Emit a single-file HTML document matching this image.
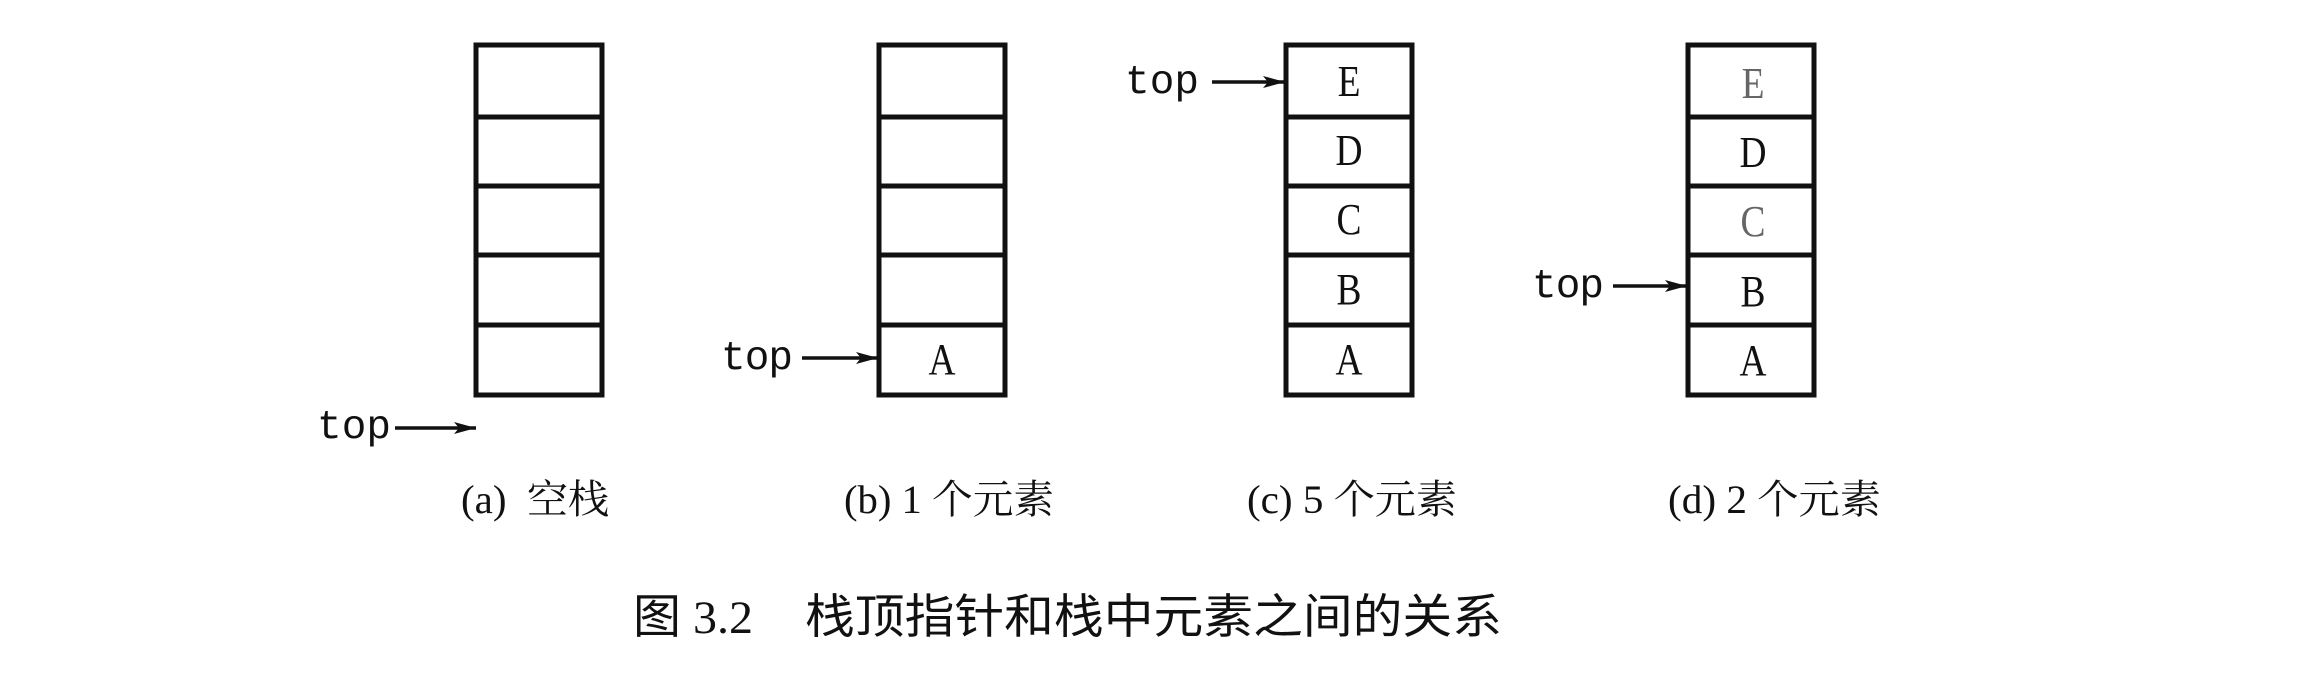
<!DOCTYPE html>
<html><head><meta charset="utf-8"><style>
html,body{margin:0;padding:0;background:#fff;}
svg{display:block}
.m{font-family:"Liberation Mono",monospace;font-size:41px;fill:#111}
.l{font-family:"Liberation Serif",serif;font-size:44px;fill:#111}
.c{font-family:"Liberation Serif","Noto Serif CJK SC",serif;font-size:40px;fill:#111}
.t{font-family:"Liberation Serif","Noto Sans CJK SC",sans-serif;font-size:47px;fill:#111}
</style></head><body>
<svg width="2300" height="673" viewBox="0 0 2300 673">
<defs>
<g id="stk" fill="none" stroke="#111" stroke-width="5">
<rect x="0" y="0" width="126" height="350"/>
<line x1="0" y1="72" x2="126" y2="72"/>
<line x1="0" y1="141" x2="126" y2="141"/>
<line x1="0" y1="210" x2="126" y2="210"/>
<line x1="0" y1="280" x2="126" y2="280"/>
</g>
<marker id="ar" markerWidth="22" markerHeight="12" refX="22" refY="6" orient="auto" markerUnits="userSpaceOnUse"><path d="M0,0 L22,6 L0,12 L5,6z" fill="#111"/></marker>
</defs>
<use href="#stk" x="476" y="45"/>
<use href="#stk" x="879" y="45"/>
<use href="#stk" x="1286" y="45"/>
<use href="#stk" x="1688" y="45"/>
<g stroke="#111" stroke-width="3.5" marker-end="url(#ar)">
<line x1="395" y1="428" x2="476" y2="428"/>
<line x1="802" y1="358" x2="878" y2="358"/>
<line x1="1212" y1="82" x2="1285" y2="82"/>
<line x1="1613" y1="286" x2="1687" y2="286"/>
</g>
<text class="m" x="317" y="438" textLength="74">top</text>
<text class="m" x="721" y="369" textLength="72">top</text>
<text class="m" x="1125" y="93" textLength="74">top</text>
<text class="m" x="1532" y="297" textLength="72">top</text>
<g class="l" text-anchor="middle">
<g transform="translate(942,374) scale(0.85,1)"><text>A</text></g>
<g transform="translate(1349,96) scale(0.85,1)"><text>E</text></g>
<g transform="translate(1349,165) scale(0.85,1)"><text>D</text></g>
<g transform="translate(1349,234) scale(0.85,1)"><text>C</text></g>
<g transform="translate(1349,304) scale(0.85,1)"><text>B</text></g>
<g transform="translate(1349,374) scale(0.85,1)"><text>A</text></g>
<g transform="translate(1753,98) scale(0.85,1)"><text fill="#666">E</text></g>
<g transform="translate(1753,167) scale(0.85,1)"><text>D</text></g>
<g transform="translate(1753,236) scale(0.85,1)"><text fill="#666">C</text></g>
<g transform="translate(1753,306) scale(0.85,1)"><text>B</text></g>
<g transform="translate(1753,375) scale(0.85,1)"><text>A</text></g>
</g>
<text class="c" x="461" y="513" textLength="148" lengthAdjust="spacingAndGlyphs">(a)&#160;&#160;空栈</text>
<text class="c" x="844" y="513" textLength="210" lengthAdjust="spacingAndGlyphs">(b) 1 个元素</text>
<text class="c" x="1247" y="513" textLength="210" lengthAdjust="spacingAndGlyphs">(c) 5 个元素</text>
<text class="c" x="1668" y="513" textLength="213" lengthAdjust="spacingAndGlyphs">(d) 2 个元素</text>
<text class="t" x="633" y="633" textLength="120" lengthAdjust="spacingAndGlyphs">图 3.2</text>
<text class="t" x="805" y="633" textLength="697" lengthAdjust="spacingAndGlyphs">栈顶指针和栈中元素之间的关系</text>
</svg>
</body></html>
